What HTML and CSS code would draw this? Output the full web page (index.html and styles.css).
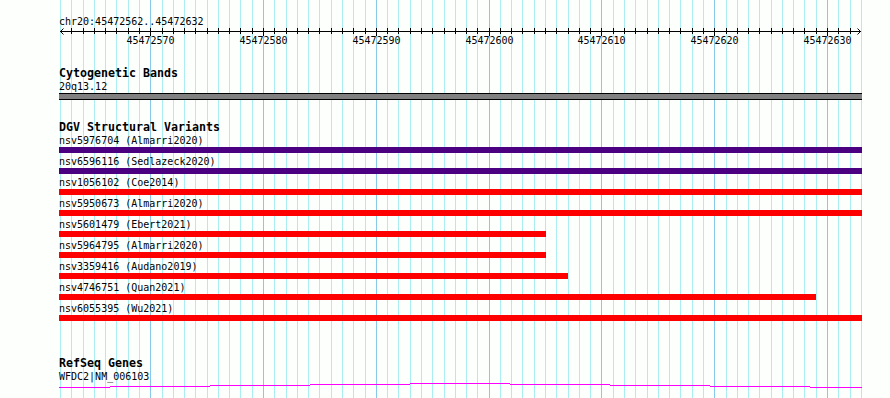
FILE: index.html
```html
<!DOCTYPE html>
<html lang="en">
<head>
    <meta charset="UTF-8">
    <title>chr20:45472562..45472632</title>
    <link rel="stylesheet" href="styles.css">
</head>
<body>

<div class="view">
    <!-- one line per base, darker every 10 bp -->
    <svg class="grid" width="890" height="398">
        <path class="grid-minor" d="M60.5 0V398M71.5 0V398M83.5 0V398M94.5 0V398M105.5 0V398M116.5 0V398M128.5 0V398M139.5 0V398M162.5 0V398M173.5 0V398M184.5 0V398M195.5 0V398M207.5 0V398M218.5 0V398M229.5 0V398M240.5 0V398M252.5 0V398M274.5 0V398M286.5 0V398M297.5 0V398M308.5 0V398M319.5 0V398M331.5 0V398M342.5 0V398M353.5 0V398M365.5 0V398M387.5 0V398M398.5 0V398M410.5 0V398M421.5 0V398M432.5 0V398M444.5 0V398M455.5 0V398M466.5 0V398M477.5 0V398M500.5 0V398M511.5 0V398M522.5 0V398M534.5 0V398M545.5 0V398M556.5 0V398M568.5 0V398M579.5 0V398M590.5 0V398M613.5 0V398M624.5 0V398M635.5 0V398M647.5 0V398M658.5 0V398M669.5 0V398M680.5 0V398M692.5 0V398M703.5 0V398M726.5 0V398M737.5 0V398M748.5 0V398M759.5 0V398M771.5 0V398M782.5 0V398M793.5 0V398M804.5 0V398M816.5 0V398M838.5 0V398M850.5 0V398M861.5 0V398"/>
        <path class="grid-major" d="M150.5 0V398M263.5 0V398M376.5 0V398M489.5 0V398M601.5 0V398M714.5 0V398M827.5 0V398"/>
    </svg>

    <div class="panel">
        <div class="locus">chr20:45472562..45472632</div>

        <svg class="ruler" viewBox="59 0 803 20" width="803" height="20">
            <path class="ruler-axis" d="M60 3.5H861"/>
            <path class="ruler-arrow" d="M63.5 0.5L60.5 3.5L63.5 6.5M857.5 0.5L860.5 3.5L857.5 6.5"/>
            <path class="ruler-axis" d="M71.5 0V6M83.5 0V6M94.5 0V6M105.5 0V6M116.5 0V6M128.5 0V6M139.5 0V6M162.5 0V6M173.5 0V6M184.5 0V6M195.5 0V6M207.5 0V6M218.5 0V6M229.5 0V6M240.5 0V6M252.5 0V6M274.5 0V6M286.5 0V6M297.5 0V6M308.5 0V6M319.5 0V6M331.5 0V6M342.5 0V6M353.5 0V6M365.5 0V6M387.5 0V6M398.5 0V6M410.5 0V6M421.5 0V6M432.5 0V6M444.5 0V6M455.5 0V6M466.5 0V6M477.5 0V6M500.5 0V6M511.5 0V6M522.5 0V6M534.5 0V6M545.5 0V6M556.5 0V6M568.5 0V6M579.5 0V6M590.5 0V6M613.5 0V6M624.5 0V6M635.5 0V6M647.5 0V6M658.5 0V6M669.5 0V6M680.5 0V6M692.5 0V6M703.5 0V6M726.5 0V6M737.5 0V6M748.5 0V6M759.5 0V6M771.5 0V6M782.5 0V6M793.5 0V6M804.5 0V6M816.5 0V6M838.5 0V6M850.5 0V6"/>
            <path class="ruler-axis" d="M150.5 0V8M263.5 0V8M376.5 0V8M489.5 0V8M601.5 0V8M714.5 0V8M827.5 0V8"/>
            <text x="150.5" y="16">45472570</text>
            <text x="263.5" y="16">45472580</text>
            <text x="376.5" y="16">45472590</text>
            <text x="489.5" y="16">45472600</text>
            <text x="601.5" y="16">45472610</text>
            <text x="714.5" y="16">45472620</text>
            <text x="827.5" y="16">45472630</text>
        </svg>

        <!-- Cytogenetic Bands -->
        <div class="track track-cyto">
            <div class="track-title">Cytogenetic Bands</div>
            <div class="feature-label">20q13.12</div>
            <div class="band"></div>
        </div>

        <!-- DGV Structural Variants -->
        <div class="track track-dgv">
            <div class="track-title">DGV Structural Variants</div>
            <div class="rows">
                <div class="feature">
                    <div class="feature-label">nsv5976704 (Almarri2020)</div>
                    <div class="bar bar-complex" style="width: 803px"></div>
                </div>
                <div class="feature">
                    <div class="feature-label">nsv6596116 (Sedlazeck2020)</div>
                    <div class="bar bar-complex" style="width: 803px"></div>
                </div>
                <div class="feature">
                    <div class="feature-label">nsv1056102 (Coe2014)</div>
                    <div class="bar bar-loss" style="width: 803px"></div>
                </div>
                <div class="feature">
                    <div class="feature-label">nsv5950673 (Almarri2020)</div>
                    <div class="bar bar-loss" style="width: 803px"></div>
                </div>
                <div class="feature">
                    <div class="feature-label">nsv5601479 (Ebert2021)</div>
                    <div class="bar bar-loss" style="width: 487px"></div>
                </div>
                <div class="feature">
                    <div class="feature-label">nsv5964795 (Almarri2020)</div>
                    <div class="bar bar-loss" style="width: 487px"></div>
                </div>
                <div class="feature">
                    <div class="feature-label">nsv3359416 (Audano2019)</div>
                    <div class="bar bar-loss" style="width: 509px"></div>
                </div>
                <div class="feature">
                    <div class="feature-label">nsv4746751 (Quan2021)</div>
                    <div class="bar bar-loss" style="width: 757px"></div>
                </div>
                <div class="feature">
                    <div class="feature-label">nsv6055395 (Wu2021)</div>
                    <div class="bar bar-loss" style="width: 803px"></div>
                </div>
            </div>
        </div>

        <!-- RefSeq Genes -->
        <div class="track track-refseq">
            <div class="track-title">RefSeq Genes</div>
            <div class="feature-label">WFDC2|NM_006103</div>
            <svg class="gene" viewBox="59 0 803 5" width="803" height="5">
                <rect x="59" y="4" width="51" height="1"/>
                <rect x="110" y="3" width="100" height="1"/>
                <rect x="210" y="2" width="100" height="1"/>
                <rect x="310" y="1" width="100" height="1"/>
                <rect x="410" y="0" width="100" height="1"/>
                <rect x="510" y="1" width="100" height="1"/>
                <rect x="610" y="2" width="100" height="1"/>
                <rect x="710" y="3" width="100" height="1"/>
                <rect x="810" y="4" width="52" height="1"/>
            </svg>
        </div>
    </div>
</div>

</body>
</html>
```

FILE: styles.css
```css
body {
    margin: 0;
    background-color: #fdfffd;
    color: #000;
    font-family: "DejaVu Sans Mono", "Liberation Mono", monospace;
    font-size: 10px;
}
.view {
    position: relative;
    width: 890px;
    height: 398px;
    overflow: hidden;
}
.grid {
    position: absolute;
    top: 0;
    left: 0;
    shape-rendering: crispEdges;
}
.grid-minor {
    stroke: #aaeef2;
    stroke-width: 1;
}
.grid-major {
    stroke: #88c8e8;
    stroke-width: 1;
}
.panel {
    position: relative;
    margin-left: 59px;
    width: 803px;
}
.locus {
    padding-top: 16px;
    line-height: 12px;
}
.ruler {
    display: block;
}
.ruler-axis {
    stroke: #000;
    stroke-width: 1;
    fill: none;
    shape-rendering: crispEdges;
}
.ruler-arrow {
    stroke: #000;
    stroke-width: 1;
    fill: none;
}
.ruler text {
    font-family: "DejaVu Sans Mono", monospace;
    font-size: 10px;
    fill: #000;
    text-anchor: middle;
}
.track-title {
    font-weight: bold;
    font-size: 11.63px;
    line-height: 13px;
    white-space: nowrap;
}
.feature-label {
    line-height: 13px;
    white-space: nowrap;
}
.track-cyto {
    margin-top: 19px;
}
.band {
    height: 5px;
    background-color: #808080;
    border-top: 1px solid #000;
    border-bottom: 1px solid #000;
}
.track-dgv {
    margin-top: 21px;
}
.rows {
    display: flex;
    flex-direction: column;
    gap: 2px;
}
.bar {
    height: 6px;
}
.bar-complex {
    background-color: #4b0082;
}
.bar-loss {
    background-color: #ff0000;
}
.track-refseq {
    margin-top: 36px;
}
.gene {
    display: block;
    shape-rendering: crispEdges;
}
.gene rect {
    fill: #ff00ff;
}
```
